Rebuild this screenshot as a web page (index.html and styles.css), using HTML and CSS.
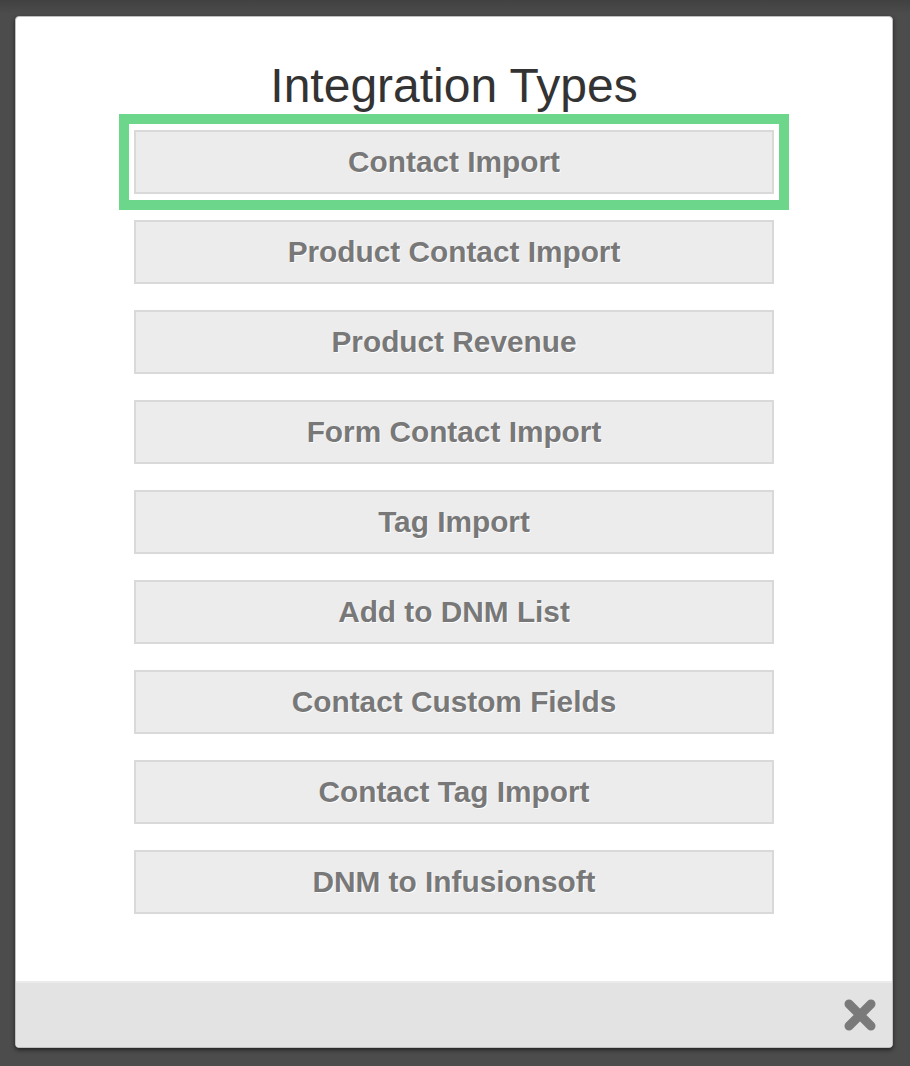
FILE: index.html
```html
<!DOCTYPE html>
<html>
<head>
<meta charset="utf-8">
<link rel="stylesheet" href="styles.css">
</head>
<body>
<div class="overlay">
  <div class="dialog">
    <div class="content">
      <h1 class="title">Integration Types</h1>
      <div class="list">
        <div class="selected"><div class="btn">Contact Import</div></div>
        <div class="btn">Product Contact Import</div>
        <div class="btn">Product Revenue</div>
        <div class="btn">Form Contact Import</div>
        <div class="btn">Tag Import</div>
        <div class="btn">Add to DNM List</div>
        <div class="btn">Contact Custom Fields</div>
        <div class="btn">Contact Tag Import</div>
        <div class="btn">DNM to Infusionsoft</div>
      </div>
    </div>
    <div class="footer">
      <svg class="close" width="34" height="34" viewBox="0 0 34 34">
        <path d="M6 6 L28 28 M28 6 L6 28" stroke="#7a7a7a" stroke-width="9" stroke-linecap="round" fill="none"/>
      </svg>
    </div>
  </div>
</div>
</body>
</html>
```

FILE: styles.css
```css
html, body {
  margin: 0;
  padding: 0;
}
body {
  background: #4c4c4c;
  height: 1066px;
  overflow: hidden;
  font-family: "Liberation Sans", Arial, sans-serif;
}
.overlay {
  padding: 16px 0 0 15px;
  background: linear-gradient(#414141 0, #4c4c4c 14px);
  height: 1066px;
  box-sizing: border-box;
}
.dialog {
  width: 878px;
  height: 1032px;
  box-sizing: border-box;
  background: #fff;
  border: 1px solid #bfbfbf;
  border-radius: 4px;
  box-shadow: 0 2px 4px rgba(0, 0, 0, 0.55);
  display: flex;
  flex-direction: column;
  overflow: hidden;
}
.content {
  flex: 1;
  padding-top: 40px;
  display: flex;
  flex-direction: column;
  align-items: center;
}
.title {
  margin: 0;
  font-weight: normal;
  font-size: 48px;
  line-height: 57px;
  color: #333;
}
.list {
  width: 640px;
  display: flex;
  flex-direction: column;
  gap: 26px;
}
.selected {
  margin: 0 -15px -16px;
  padding: 6px 5px;
  border: 10px solid #6cd68a;
}
.btn {
  height: 64px;
  box-sizing: border-box;
  border: 2px solid #d9d9d9;
  background: #ececec;
  display: flex;
  align-items: center;
  justify-content: center;
  font-weight: bold;
  font-size: 29.8px;
  color: #787878;
  text-shadow: 1px 1px 0 rgba(255, 255, 255, 0.9);
}
.footer {
  height: 66px;
  box-sizing: border-box;
  background: #e3e3e3;
  border-top: 2px solid #ebebeb;
  display: flex;
  justify-content: flex-end;
  align-items: center;
  padding-right: 15px;
}
.close {
  display: block;
}
```
